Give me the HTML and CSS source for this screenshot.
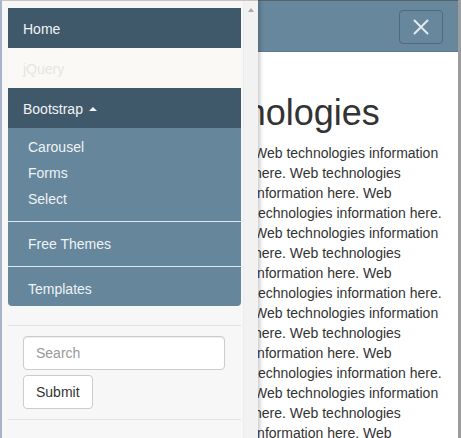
FILE: index.html
```html
<!DOCTYPE html>
<html lang="en">
<head>
<meta charset="utf-8">
<title>Web Technologies</title>
<link rel="stylesheet" href="styles.css">
</head>
<body>
<div class="main">
  <header class="topbar">
    <button class="close-btn" type="button" aria-label="Close">
      <svg width="16" height="16" viewBox="0 0 16 16" aria-hidden="true"><path d="M1.5 1.5 L14.5 14.5 M14.5 1.5 L1.5 14.5" stroke="#e2eaf0" stroke-width="2" fill="none" stroke-linecap="round"/></svg>
    </button>
  </header>
  <div class="content">
    <h1 class="title">Web Technologies</h1>
    <p class="text">Web technologies information here. Web technologies information here. Web technologies information here. Web technologies information here. Web technologies information here. Web technologies information here. Web technologies information here. Web technologies information here. Web technologies information here. Web technologies information here. Web technologies information here. Web technologies information here.</p>
  </div>
</div>
<aside class="panel">
  <div class="panel-inner">
    <ul class="menu">
      <li class="item dark">Home</li>
      <li class="item light">jQuery</li>
      <li class="item dark">Bootstrap <span class="caret"></span></li>
      <li class="sub">
        <ul class="sub-list">
          <li class="sub-item">Carousel</li>
          <li class="sub-item">Forms</li>
          <li class="sub-item">Select</li>
        </ul>
      </li>
      <li class="item steel">Free Themes</li>
      <li class="item steel last">Templates</li>
    </ul>
    <form class="search">
      <input class="search-input" type="text" placeholder="Search">
      <button class="submit-btn" type="button">Submit</button>
    </form>
  </div>
  <div class="scrollbar"><span class="arrow"></span></div>
</aside>
</body>
</html>
```
FILE: styles.css
```css
* { box-sizing: border-box; }
html, body { margin: 0; padding: 0; }
body {
  font-family: "Liberation Sans", Arial, sans-serif;
  font-size: 14px;
  color: #333;
  background: #fff;
  overflow: hidden;
}
.main {
  height: 100vh;
  border-right: 3px solid #9c9c9c;
  overflow: hidden;
}
.topbar {
  height: 52px;
  background: #67879c;
  border-top: 1px solid #56636d;
  border-bottom: 1px solid #5b7a8f;
  display: flex;
  justify-content: flex-end;
  align-items: flex-start;
  padding-top: 9px;
  padding-right: 15px;
}
.close-btn {
  width: 44px;
  height: 34px;
  border: 1px solid #50697b;
  border-radius: 4px;
  background: transparent;
  display: flex;
  align-items: center;
  justify-content: center;
  padding: 0;
}
.close-btn svg { display: block; }
.content {
  padding: 21px 12px 0 254px;
}
.title {
  font-size: 36px;
  font-weight: normal;
  line-height: 1.1;
  margin: 20px 0 10px -167px;
  white-space: nowrap;
  color: #333;
}
.text {
  margin: 0;
  line-height: 20px;
}
.panel {
  position: absolute;
  top: 0;
  left: 0;
  width: 258px;
  height: 100vh;
  background: #f7f7f7;
  border-left: 2px solid #a9b3c8;
  border-top: 1px solid #cbc3ba;
  box-shadow: 2px 0 4px rgba(0,0,0,0.22);
  display: flex;
}
.panel-inner {
  width: 239px;
  padding: 7px 0 0 6px;
}
.menu {
  list-style: none;
  margin: 0;
  padding: 0;
  border-radius: 0 0 4px 4px;
  overflow: hidden;
}
.item {
  padding: 11px 15px 9px;
  line-height: 20px;
}
.dark { background: #40596a; color: #f1f3f5; }
.light { background: #fbf9f6; color: #e5e5e5; }
.caret {
  display: inline-block;
  width: 0;
  height: 0;
  margin-left: 2px;
  vertical-align: middle;
  border-bottom: 4px solid #f1f3f5;
  border-left: 4px solid transparent;
  border-right: 4px solid transparent;
  position: relative;
  top: -1px;
}
.sub {
  background: #66869c;
  padding: 6px 0 9px;
}
.sub-list {
  list-style: none;
  margin: 0;
  padding: 0;
}
.sub-item {
  padding: 3px 20px;
  line-height: 20px;
  color: #eef3f6;
}
.steel {
  background: #66869c;
  color: #eef3f6;
  border-top: 1px solid #dfe8ee;
  padding: 12px 20px;
}
.steel.last { padding-bottom: 7px; }
.search {
  margin-top: 19px;
  border-top: 1px solid #e3e3e3;
  border-bottom: 1px solid #e3e3e3;
  padding: 10px 15px;
  display: flex;
  flex-direction: column;
  align-items: flex-start;
  gap: 5px;
}
.search-input {
  width: 202px;
  height: 34px;
  border: 1px solid #ccc;
  border-radius: 4px;
  padding: 6px 12px;
  font-family: "Liberation Sans", Arial, sans-serif;
  font-size: 14px;
  color: #555;
  background: #fff;
  box-shadow: inset 0 1px 1px rgba(0,0,0,0.075);
  outline: none;
}
.search-input::placeholder { color: #999; }
.submit-btn {
  height: 34px;
  border: 1px solid #ccc;
  border-radius: 4px;
  padding: 6px 12px;
  font-family: "Liberation Sans", Arial, sans-serif;
  font-size: 14px;
  color: #333;
  background: #fff;
}
.scrollbar {
  width: 15px;
  margin-left: 2px;
  background: #f2f2f2;
  border-left: 1px solid #ececec;
  display: flex;
  flex-direction: column;
  align-items: center;
  padding-top: 7px;
}
.arrow {
  width: 0;
  height: 0;
  border-bottom: 4px solid #a8a8a8;
  border-left: 3.5px solid transparent;
  border-right: 3.5px solid transparent;
}
```
